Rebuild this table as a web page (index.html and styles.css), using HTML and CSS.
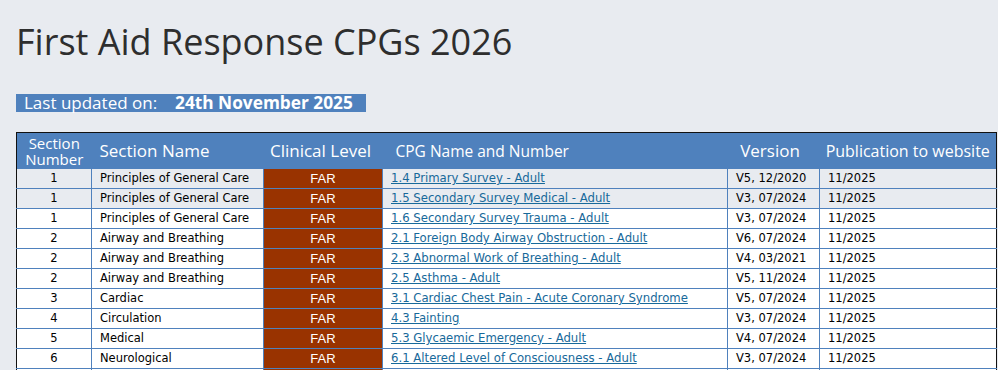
FILE: index.html
```html
<!DOCTYPE html>
<html>
<head>
<meta charset="utf-8">
<link rel="stylesheet" href="styles.css">
</head>
<body>
<h1 class="title">First Aid Response CPGs 2026</h1>
<div class="updated"><span class="upd-label">Last updated on:</span><span class="upd-date">24th November 2025</span></div>
<table class="cpg">
<colgroup>
<col class="w-num"><col class="w-name"><col class="w-level"><col class="w-cpg"><col class="w-ver"><col class="w-pub">
</colgroup>
<thead>
<tr>
<th class="small"><span class="hl">Section</span><span class="hl">Number</span></th>
<th class="left">Section Name</th>
<th class="level-h">Clinical Level</th>
<th class="left cpg-h">CPG Name and Number</th>
<th class="ver-h">Version</th>
<th class="pub-h">Publication to website</th>
</tr>
</thead>
<tbody>
<tr class="grey"><td class="num">1</td><td>Principles of General Care</td><td class="far">FAR</td><td><a href="#">1.4 Primary Survey - Adult </a></td><td>V5, 12/2020</td><td>11/2025</td></tr>
<tr class="grey"><td class="num">1</td><td>Principles of General Care</td><td class="far">FAR</td><td><a href="#">1.5 Secondary Survey Medical - Adult</a></td><td>V3, 07/2024</td><td>11/2025</td></tr>
<tr><td class="num">1</td><td>Principles of General Care</td><td class="far">FAR</td><td><a href="#">1.6 Secondary Survey Trauma - Adult</a></td><td>V3, 07/2024</td><td>11/2025</td></tr>
<tr><td class="num">2</td><td>Airway and Breathing</td><td class="far">FAR</td><td><a href="#">2.1 Foreign Body Airway Obstruction - Adult</a></td><td>V6, 07/2024</td><td>11/2025</td></tr>
<tr><td class="num">2</td><td>Airway and Breathing</td><td class="far">FAR</td><td><a href="#">2.3 Abnormal Work of Breathing - Adult</a></td><td>V4, 03/2021</td><td>11/2025</td></tr>
<tr><td class="num">2</td><td>Airway and Breathing</td><td class="far">FAR</td><td><a href="#">2.5 Asthma - Adult </a></td><td>V5, 11/2024</td><td>11/2025</td></tr>
<tr><td class="num">3</td><td>Cardiac</td><td class="far">FAR</td><td><a href="#">3.1 Cardiac Chest Pain - Acute Coronary Syndrome </a></td><td>V5, 07/2024</td><td>11/2025</td></tr>
<tr><td class="num">4</td><td>Circulation</td><td class="far">FAR</td><td><a href="#">4.3 Fainting </a></td><td>V3, 07/2024</td><td>11/2025</td></tr>
<tr><td class="num">5</td><td>Medical</td><td class="far">FAR</td><td><a href="#">5.3 Glycaemic Emergency - Adult</a></td><td>V4, 07/2024</td><td>11/2025</td></tr>
<tr><td class="num">6</td><td>Neurological</td><td class="far">FAR</td><td><a href="#">6.1 Altered Level of Consciousness - Adult </a></td><td>V3, 07/2024</td><td>11/2025</td></tr>
<tr><td class="num">6</td><td>Neurological</td><td class="far">FAR</td><td><a href="#">6.2 Seizures - Adult</a></td><td>V3, 07/2024</td><td>11/2025</td></tr>
</tbody>
</table>
</body>
</html>
```
FILE: styles.css
```css
html, body {
  margin: 0;
  padding: 0;
  background: #e8ebf0;
}
body {
  padding: 0 0 0 16px;
  font-family: "Open Sans", sans-serif;
  color: #333;
}
.title {
  margin: 0;
  padding-top: 19px;
  font-family: "Open Sans", sans-serif;
  font-weight: 400;
  font-size: 36px;
  line-height: 46px;
  color: #2e2e2e;
}
.updated {
  margin-top: 29px;
  width: 350px;
  height: 18px;
  background: #4f81bd;
  color: #fff;
  font-size: 17px;
  line-height: 18px;
  display: flex;
  align-items: center;
  white-space: nowrap;
}
.upd-label {
  padding-left: 8px;
  width: 151px;
}
.upd-date {
  font-weight: 700;
  font-size: 17.3px;
}
.cpg {
  margin-top: 20px;
  width: 980px;
  table-layout: fixed;
  border-collapse: collapse;
  border: 1px solid #111;
  font-family: "DejaVu Sans", Verdana, sans-serif;
  font-size: 11.5px;
  color: #000;
}
.w-num { width: 75px; }
.w-name { width: 172px; }
.w-level { width: 119px; }
.w-cpg { width: 345px; }
.w-ver { width: 92px; }
.w-pub { width: 177px; }
.cpg th {
  background: #4f81bd;
  color: #fff;
  font-family: "Open Sans", sans-serif;
  font-weight: 400;
  font-size: 17px;
  line-height: 18px;
  height: 35px;
  padding: 0 2px;
  text-align: center;
  white-space: nowrap;
}
.cpg th.small {
  font-size: 15px;
  line-height: 16px;
}
.hl {
  display: block;
  height: 16px;
  line-height: 16px;
}
.cpg th.left { text-align: left; padding-left: 8px; }
.cpg th.level-h { padding-right: 7px; }
.cpg th.cpg-h { padding-left: 13px; font-size: 15.5px; }
.cpg th.ver-h { padding-right: 9px; }
.cpg th.pub-h { font-size: 16px; }
.cpg td {
  height: 19px;
  padding: 0 8px;
  border: 1px solid #4f81bd;
  background: #fff;
  white-space: nowrap;
  overflow: hidden;
  line-height: 19px;
}
.cpg tr.grey td { background: #e8ebf0; }
.cpg tr td:first-child { border-left-color: #111; }
.cpg tr td:last-child { border-right-color: #111; }
.cpg td.num { text-align: center; }
.cpg td.far,
.cpg tr.grey td.far {
  background: #993300;
  color: #fff;
  text-align: center;
  font-family: "Liberation Sans", Arial, sans-serif;
  font-size: 13px;
}
.cpg a {
  font-size: 11.7px;
  color: #17699a;
  text-decoration: underline;
}
```
